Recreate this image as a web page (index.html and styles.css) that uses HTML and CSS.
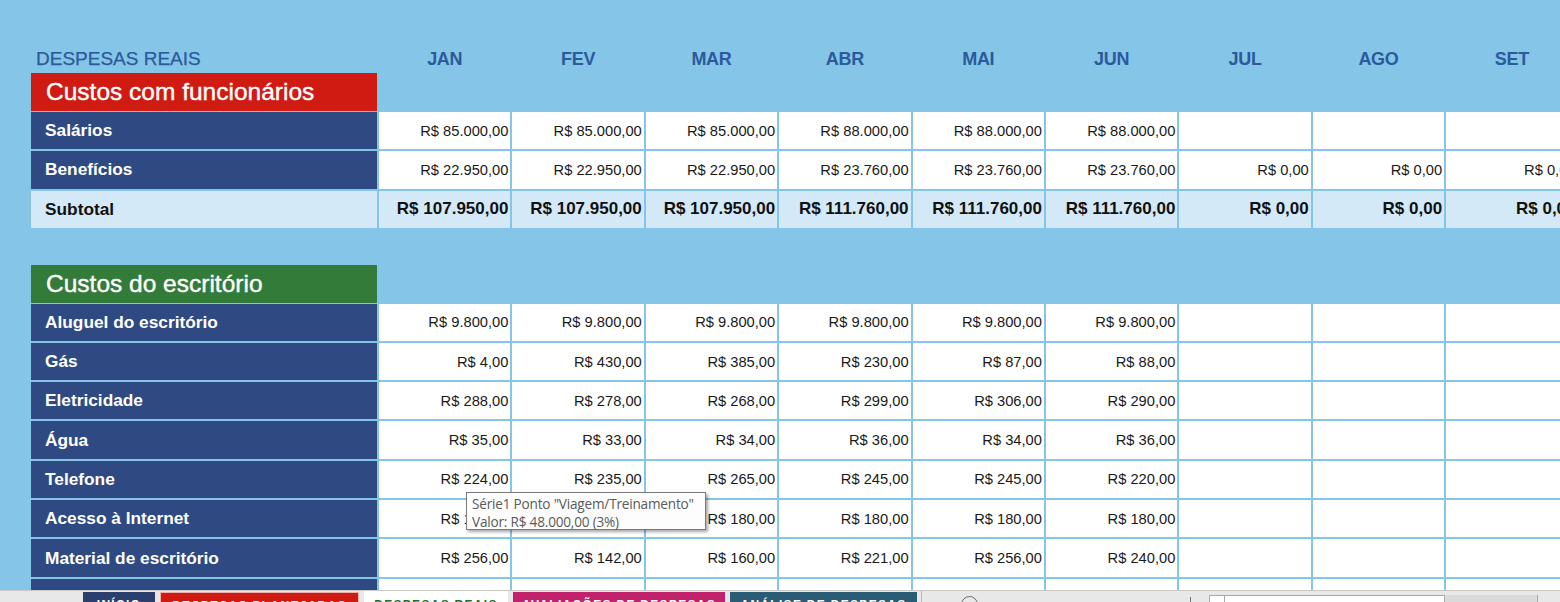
FILE: index.html
```html
<!DOCTYPE html>
<html lang="pt-BR">
<head>
<meta charset="utf-8">
<title>Despesas Reais</title>
<link rel="stylesheet" href="styles.css">
</head>
<body>
<div class="app">
  <div class="sheet">
    <div class="row head-row">
      <div class="title">DESPESAS REAIS</div>
      <div class="month">JAN</div><div class="month">FEV</div><div class="month">MAR</div>
      <div class="month">ABR</div><div class="month">MAI</div><div class="month">JUN</div>
      <div class="month">JUL</div><div class="month">AGO</div><div class="month">SET</div>
    </div>

    <div class="row section-row">
      <div class="section red">Custos com funcionários</div>
    </div>
    <div class="row data">
      <div class="label">Salários</div>
      <div class="cell">R$ 85.000,00</div><div class="cell">R$ 85.000,00</div><div class="cell">R$ 85.000,00</div>
      <div class="cell">R$ 88.000,00</div><div class="cell">R$ 88.000,00</div><div class="cell">R$ 88.000,00</div>
      <div class="cell"></div><div class="cell"></div><div class="cell"></div>
    </div>
    <div class="row data">
      <div class="label">Benefícios</div>
      <div class="cell">R$ 22.950,00</div><div class="cell">R$ 22.950,00</div><div class="cell">R$ 22.950,00</div>
      <div class="cell">R$ 23.760,00</div><div class="cell">R$ 23.760,00</div><div class="cell">R$ 23.760,00</div>
      <div class="cell">R$ 0,00</div><div class="cell">R$ 0,00</div><div class="cell">R$ 0,00</div>
    </div>
    <div class="row data subtotal">
      <div class="label">Subtotal</div>
      <div class="cell">R$ 107.950,00</div><div class="cell">R$ 107.950,00</div><div class="cell">R$ 107.950,00</div>
      <div class="cell">R$ 111.760,00</div><div class="cell">R$ 111.760,00</div><div class="cell">R$ 111.760,00</div>
      <div class="cell">R$ 0,00</div><div class="cell">R$ 0,00</div><div class="cell">R$ 0,00</div>
    </div>

    <div class="row section-row spaced">
      <div class="section green">Custos do escritório</div>
    </div>
    <div class="row data">
      <div class="label">Aluguel do escritório</div>
      <div class="cell">R$ 9.800,00</div><div class="cell">R$ 9.800,00</div><div class="cell">R$ 9.800,00</div>
      <div class="cell">R$ 9.800,00</div><div class="cell">R$ 9.800,00</div><div class="cell">R$ 9.800,00</div>
      <div class="cell"></div><div class="cell"></div><div class="cell"></div>
    </div>
    <div class="row data">
      <div class="label">Gás</div>
      <div class="cell">R$ 4,00</div><div class="cell">R$ 430,00</div><div class="cell">R$ 385,00</div>
      <div class="cell">R$ 230,00</div><div class="cell">R$ 87,00</div><div class="cell">R$ 88,00</div>
      <div class="cell"></div><div class="cell"></div><div class="cell"></div>
    </div>
    <div class="row data">
      <div class="label">Eletricidade</div>
      <div class="cell">R$ 288,00</div><div class="cell">R$ 278,00</div><div class="cell">R$ 268,00</div>
      <div class="cell">R$ 299,00</div><div class="cell">R$ 306,00</div><div class="cell">R$ 290,00</div>
      <div class="cell"></div><div class="cell"></div><div class="cell"></div>
    </div>
    <div class="row data">
      <div class="label">Água</div>
      <div class="cell">R$ 35,00</div><div class="cell">R$ 33,00</div><div class="cell">R$ 34,00</div>
      <div class="cell">R$ 36,00</div><div class="cell">R$ 34,00</div><div class="cell">R$ 36,00</div>
      <div class="cell"></div><div class="cell"></div><div class="cell"></div>
    </div>
    <div class="row data">
      <div class="label">Telefone</div>
      <div class="cell">R$ 224,00</div><div class="cell">R$ 235,00</div><div class="cell">R$ 265,00</div>
      <div class="cell">R$ 245,00</div><div class="cell">R$ 245,00</div><div class="cell">R$ 220,00</div>
      <div class="cell"></div><div class="cell"></div><div class="cell"></div>
    </div>
    <div class="row data">
      <div class="label">Acesso à Internet</div>
      <div class="cell">R$ 180,00</div><div class="cell">R$ 180,00</div><div class="cell">R$ 180,00</div>
      <div class="cell">R$ 180,00</div><div class="cell">R$ 180,00</div><div class="cell">R$ 180,00</div>
      <div class="cell"></div><div class="cell"></div><div class="cell"></div>
    </div>
    <div class="row data">
      <div class="label">Material de escritório</div>
      <div class="cell">R$ 256,00</div><div class="cell">R$ 142,00</div><div class="cell">R$ 160,00</div>
      <div class="cell">R$ 221,00</div><div class="cell">R$ 256,00</div><div class="cell">R$ 240,00</div>
      <div class="cell"></div><div class="cell"></div><div class="cell"></div>
    </div>
    <div class="row data">
      <div class="label">Limpeza</div>
      <div class="cell"></div><div class="cell"></div><div class="cell"></div>
      <div class="cell"></div><div class="cell"></div><div class="cell"></div>
      <div class="cell"></div><div class="cell"></div><div class="cell"></div>
    </div>

    <div class="tooltip">
      <div>Série1 Ponto "Viagem/Treinamento"</div>
      <div>Valor: R$ 48.000,00 (3%)</div>
    </div>
  </div>

  <div class="tabbar">
    <div class="nav"></div>
    <div class="tabs">
      <div class="tab t-inicio">INÍCIO</div>
      <div class="tab t-plan">DESPESAS PLANEJADAS</div>
      <div class="tab t-reais">DESPESAS REAIS</div>
      <div class="tab t-aval">AVALIAÇÕES DE DESPESAS</div>
      <div class="tab t-anal">ANÁLISE DE DESPESAS</div>
    </div>
    <div class="sep"></div>
    <div class="addbtn"></div>
    <div class="tick"></div>
    <div class="scroll">
      <div class="sbtn"></div>
      <div class="strack"></div>
      <div class="sthumb"></div>
    </div>
  </div>
</div>
</body>
</html>
```

FILE: styles.css
```css
* { box-sizing: border-box; }
html, body {
  margin: 0;
  padding: 0;
  width: 1560px;
  height: 602px;
  overflow: hidden;
  background: #84c5e8;
  font-family: "Liberation Sans", Arial, sans-serif;
}
.app {
  display: flex;
  flex-direction: column;
  height: 602px;
}
.sheet {
  position: relative;
  height: 590px;
  flex: none;
  overflow: hidden;
  padding-left: 31px;
  background: #84c5e8;
}
.row {
  display: grid;
  grid-template-columns: 346px repeat(9, 131.4px);
  column-gap: 2px;
  width: max-content;
}
.head-row {
  height: 73px;
  align-items: end;
  padding-bottom: 3px;
  color: #2c5a9a;
  font-size: 19px;
  line-height: 22px;
}
.title {
  padding-left: 5px;
  -webkit-text-stroke: 0.25px #2c5a9a;
}
.month {
  text-align: center;
  font-weight: bold;
  font-size: 18px;
  letter-spacing: -0.3px;
}
.section-row {
  height: 37px;
}
.section-row.spaced {
  margin-top: 36.7px;
}
.section {
  color: #fff;
  font-size: 24.5px;
  line-height: 38px;
  padding-left: 15px;
  -webkit-text-stroke: 0.4px #fff;
}
.red { background: #d01b12; }
.green { background: #327b38; }
.data {
  height: 37.3px;
  margin-top: 2px;
}
.label {
  background: #2f4a82;
  color: #fff;
  font-weight: bold;
  font-size: 17.3px;
  padding-left: 14px;
  display: flex;
  align-items: center;
}
.cell {
  background: #fff;
  color: #1a1a1a;
  font-size: 14.7px;
  padding-right: 2px;
  display: flex;
  align-items: center;
  justify-content: flex-end;
}
.subtotal .label,
.subtotal .cell {
  background: #d4e9f8;
  color: #111;
  font-weight: bold;
}
.subtotal .label { font-size: 17.3px; }
.subtotal .cell { font-size: 17px; }

.tooltip {
  position: absolute;
  left: 466px;
  top: 492px;
  width: 240px;
  height: 38px;
  background: #fdfdfd;
  border: 1px solid #7a7a7a;
  box-shadow: 2px 2px 3px rgba(0,0,0,0.35);
  color: #5a5a5a;
  font-family: "Open Sans", "Noto Sans", sans-serif;
  font-size: 13.6px;
  line-height: 18px;
  padding: 2px 0 0 5px;
  letter-spacing: -0.2px;
  white-space: nowrap;
}

.tabbar {
  flex: 1;
  display: flex;
  align-items: flex-start;
  background: #e8e8e8;
  border-top: 1px solid #c9c9c9;
  position: relative;
}
.nav { width: 83px; flex: none; }
.tabs {
  display: flex;
  gap: 5px;
  padding-top: 1px;
}
.tab {
  height: 26px;
  color: #fff;
  font-weight: bold;
  font-size: 12px;
  letter-spacing: 1.3px;
  text-align: center;
  padding-top: 6px;
  flex: none;
  white-space: nowrap;
  overflow: hidden;
}
.t-inicio { width: 72px; background: #2b3f6e; }
.t-plan { width: 199px; background: #d01b12; border: 1px solid #f0b0b0; }
.t-reais { width: 144px; background: #fff; color: #1f6d30; margin-top: -1px; height: 28px; padding-top: 7px; }
.t-aval { width: 212px; background: #c0226b; }
.t-anal { width: 187px; background: #2a5c76; }
.sep {
  width: 1px;
  height: 20px;
  background: #bcbcbc;
  margin-left: 4px;
  flex: none;
}
.addbtn {
  width: 17px;
  height: 17px;
  border: 1.5px solid #6a6a6a;
  border-radius: 50%;
  margin: 5px 0 0 39px;
  flex: none;
}
.tick {
  width: 1px;
  height: 6px;
  background: #777;
  margin: 6px 0 0 212px;
  flex: none;
}
.scroll {
  display: flex;
  margin: 4px 0 0 18px;
  flex: none;
}
.sbtn { width: 16px; height: 18px; background: #fff; border: 1px solid #aaa; }
.strack { width: 220px; height: 18px; background: #fff; border: 1px solid #aaa; border-left: none; }
.sthumb { width: 93px; height: 18px; background: #dadada; border-right: 1px solid #aaa; }
```
